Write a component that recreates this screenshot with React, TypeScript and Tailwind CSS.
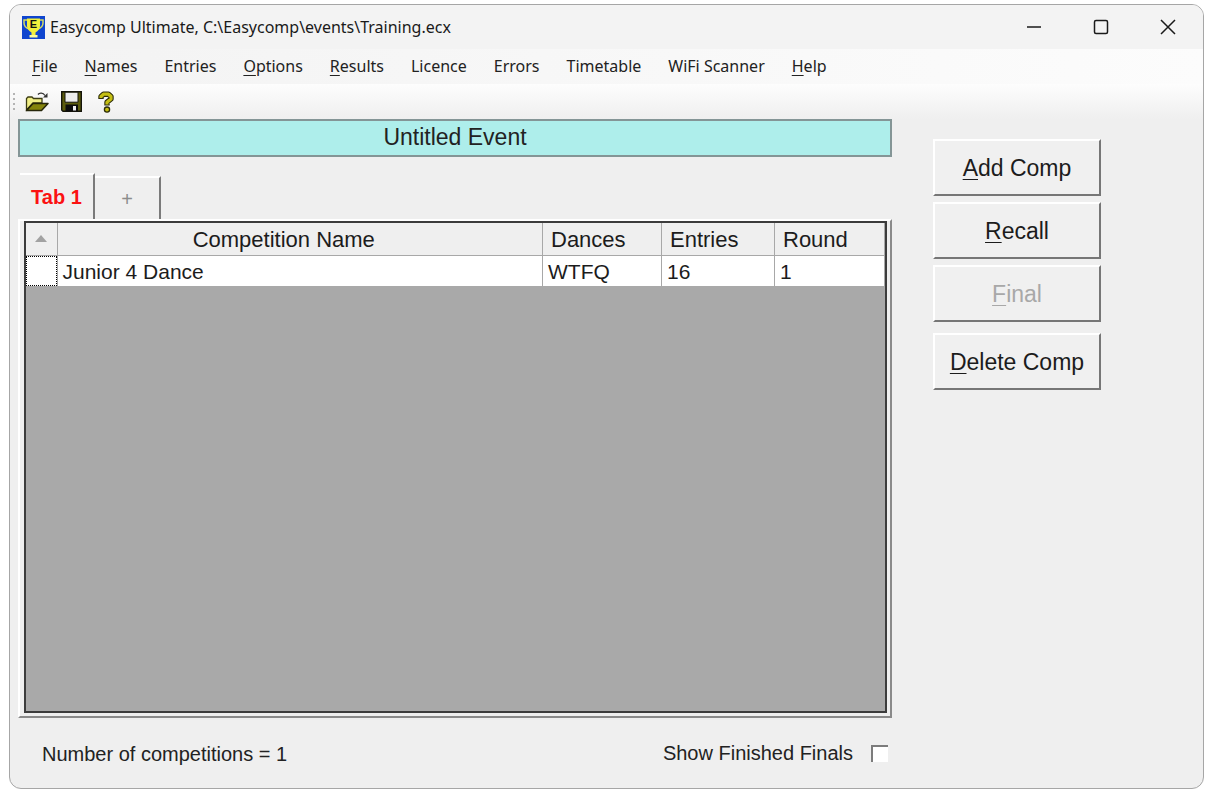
import { useState, type ReactNode } from "react"

const menuItems = [
  { label: "File", mnemonic: true },
  { label: "Names", mnemonic: true },
  { label: "Entries", mnemonic: false },
  { label: "Options", mnemonic: true },
  { label: "Results", mnemonic: true },
  { label: "Licence", mnemonic: false },
  { label: "Errors", mnemonic: false },
  { label: "Timetable", mnemonic: false },
  { label: "WiFi Scanner", mnemonic: false },
  { label: "Help", mnemonic: true },
]

const competitions = [{ name: "Junior 4 Dance", dances: "WTFQ", entries: 16, round: 1 }]

function Mnemonic({ label }: { label: string }) {
  return (
    <>
      <span className="underline decoration-1 underline-offset-3">{label[0]}</span>
      {label.slice(1)}
    </>
  )
}

function TrophyIcon() {
  return (
    <svg width="23" height="23" viewBox="0 0 23 23" aria-hidden="true">
      <rect width="23" height="23" fill="#0f45cf" />
      <path d="M6 4H2v3c0 3 2 5 5 6M17 4h4v3c0 3-2 5-5 6" fill="none" stroke="#d3dc62" strokeWidth="1.500" />
      <path d="M5 2.500h13V10c0 3-2 5-4.500 6.500V19h-4v-2.500C7 15 5 13 5 10z" fill="#f2f03c" />
      <path d="M7.500 19h8v2.500h-8z" fill="#fdfb9a" />
      <text x="11.500" y="12" textAnchor="middle" fontSize="11" fontWeight="700" fontFamily="Liberation Sans, sans-serif" fill="#111">
        E
      </text>
    </svg>
  )
}

function OpenIcon() {
  return (
    <svg width="24" height="22" viewBox="0 0 24 22" aria-hidden="true">
      <path d="M1.500 19V7.500L3 6h4l1.500 1.500h8.500V12H8z" fill="#f0ee86" stroke="#3c3c12" strokeWidth="1.300" />
      <path d="M1.500 19.500L8 12.500h15L16.500 19.500z" fill="#84840c" stroke="#26260a" strokeWidth="1.500" strokeLinejoin="round" />
      <path d="M13 3.500c1.500-2 5-2 7 1" fill="none" stroke="#333" strokeWidth="1.300" />
      <path d="M22.500 2v4.500H18z" fill="#333" />
    </svg>
  )
}

function SaveIcon() {
  return (
    <svg width="21" height="21" viewBox="0 0 21 21" aria-hidden="true">
      <path d="M.700.700h19.600v19.600H2L.700 19z" fill="#5c5c0c" stroke="#14140a" strokeWidth="1.400" />
      <path d="M4 1.200h13v10H4z" fill="#ececec" stroke="#14140a" />
      <path d="M4.500 13.500h12.500v6.800H4.500z" fill="#0c0c0c" />
      <path d="M12 15h3v4.500h-3z" fill="#f0f0f0" />
    </svg>
  )
}

function HelpIcon() {
  return (
    <svg width="16" height="22" viewBox="0 0 16 22" aria-hidden="true">
      <g fill="none" strokeLinejoin="round">
        <path d="M3 8V5.500L5.500 3.200h5L13 5.500v2.500L9 11.200V14.500" stroke="#2c2c08" strokeWidth="5.400" />
        <path d="M3 7V5.500L5.500 3.200h5L13 5.500v2.500L9 11.200V13.500" stroke="#c4be14" strokeWidth="3.200" />
      </g>
      <circle cx="9" cy="18.600" r="2.600" fill="#c4be14" stroke="#2c2c08" strokeWidth="1.300" />
    </svg>
  )
}

function CaptionButton({ label, children }: { label: string; children: ReactNode }) {
  return (
    <button type="button" aria-label={label} className="flex h-full w-[67px] items-center justify-center hover:bg-black/5">
      <svg width="16" height="16" viewBox="0 0 16 16" fill="none" stroke="#1a1a1a" strokeWidth="1.500" aria-hidden="true">
        {children}
      </svg>
    </button>
  )
}

function CommandButton({ label, disabled = false }: { label: string; disabled?: boolean }) {
  return (
    <button
      type="button"
      disabled={disabled}
      className="h-[57px] w-full border-2 border-t-white border-r-[#767676] border-b-[#767676] border-l-white bg-[#f0f0f0] text-[23px] leading-7 text-[#1c1c1c] disabled:text-[#a8a8a8]"
    >
      <Mnemonic label={label} />
    </button>
  )
}

export default function App() {
  const [showFinished, setShowFinished] = useState(false)

  return (
    <div className="flex min-h-screen flex-col bg-white pt-1 pr-[10px] pb-2 pl-[9px] font-['Liberation_Sans',Arial,sans-serif] text-[#222]">
      <div className="flex flex-1 flex-col overflow-hidden rounded-xl border border-[#a6a6a6] bg-[#efefef]">
        <header className="flex h-11 items-center bg-[#f3f3f3] pr-[2px] pl-3 font-['Noto_Sans','Open_Sans',sans-serif]">
          <TrophyIcon />
          <h1 className="ml-[5px] flex-1 text-[16px] leading-6 text-[#1a1a1a]">
            Easycomp Ultimate, C:\Easycomp\events\Training.ecx
          </h1>
          <div className="flex h-full">
            <CaptionButton label="Minimize">
              <path d="M1 8h14" />
            </CaptionButton>
            <CaptionButton label="Maximize">
              <rect x="1.500" y="1.500" width="13" height="13" rx="1.500" />
            </CaptionButton>
            <CaptionButton label="Close">
              <path d="M1 1l14 14M15 1L1 15" />
            </CaptionButton>
          </div>
        </header>

        <nav className="flex h-[35px] items-center gap-[27px] bg-linear-to-r from-[#f3f3f3] to-[#fcfcfc] pb-[2px] pl-[22px] font-['Noto_Sans','Open_Sans',sans-serif] text-[16px] leading-6">
          {menuItems.map((item) => (
            <button key={item.label} type="button" className="whitespace-nowrap">
              {item.mnemonic ? <Mnemonic label={item.label} /> : item.label}
            </button>
          ))}
        </nav>

        <div className="flex h-[35px] items-center bg-linear-to-b from-[#fdfdfd] to-[#efefef] pl-[3px]">
          <div className="flex flex-col gap-[3px]">
            <span className="size-[2px] bg-[#b4b4b4]" />
            <span className="size-[2px] bg-[#b4b4b4]" />
            <span className="size-[2px] bg-[#b4b4b4]" />
            <span className="size-[2px] bg-[#b4b4b4]" />
          </div>
          <button type="button" aria-label="Open" className="ml-[10px]">
            <OpenIcon />
          </button>
          <button type="button" aria-label="Save" className="ml-3">
            <SaveIcon />
          </button>
          <button type="button" aria-label="Help topics" className="ml-4">
            <HelpIcon />
          </button>
        </div>

        <main className="flex flex-1 pl-2">
          <section className="flex flex-1 flex-col">
            <h2 className="h-[38px] border-2 border-[#849596] bg-[#aeeeeb] text-center text-[23px] leading-8">
              Untitled Event
            </h2>

            <div role="tablist" className="mt-4 flex items-end pl-[2px]">
              <button
                type="button"
                role="tab"
                aria-selected="true"
                className="h-[46px] w-[75px] border-t-2 border-r-2 border-t-white border-r-[#7a7a7a] text-[20px] leading-6 font-bold text-[#fb1212]"
              >
                Tab 1
              </button>
              <button
                type="button"
                role="tab"
                aria-selected="false"
                aria-label="New tab"
                className="h-[43px] w-[66px] border-t-2 border-r-2 border-t-white border-r-[#7a7a7a] text-[20px] leading-6 text-[#8c8c8c]"
              >
                +
              </button>
            </div>

            <div className="flex flex-1 flex-col border-2 border-t-white border-r-[#8a8a8a] border-b-[#8a8a8a] border-l-white pr-[3px] pb-[3px] pl-1">
              <div className="flex-1 border-2 border-[#3c3c3c] bg-[#a9a9a9]">
                <table className="w-full table-fixed border-collapse text-[21px] leading-6 text-[#1c1c1c]">
                  <colgroup>
                    <col className="w-[31px]" />
                    <col />
                    <col className="w-[119px]" />
                    <col className="w-[113px]" />
                    <col className="w-[110px]" />
                  </colgroup>
                  <thead>
                    <tr className="h-8 bg-[#efefef] text-left text-[22px]">
                      <th className="border-r border-b border-[#a8a8a8]" aria-label="Sort">
                        <svg className="mx-auto" width="12" height="7" viewBox="0 0 12 7" aria-hidden="true">
                          <path d="M6 0l6 7H0z" fill="#a2a2a2" />
                        </svg>
                      </th>
                      <th className="border-r border-b border-[#a8a8a8] pt-[2px] pr-8 text-center font-normal">Competition Name</th>
                      <th className="border-r border-b border-[#a8a8a8] pt-[2px] pl-2 font-normal">Dances</th>
                      <th className="border-r border-b border-[#a8a8a8] pt-[2px] pl-2 font-normal">Entries</th>
                      <th className="border-r border-b border-[#a8a8a8] pt-[2px] pl-2 font-normal">Round</th>
                    </tr>
                  </thead>
                  <tbody>
                    {competitions.map((comp) => (
                      <tr key={comp.name} className="h-[30px] bg-white">
                        <td className="border-r border-[#a8a8a8] p-0">
                          <div className="h-[30px] border border-dotted border-black" />
                        </td>
                        <td className="border-r border-[#a8a8a8] pt-[2px] pl-[5px]">{comp.name}</td>
                        <td className="border-r border-[#a8a8a8] pt-[2px] pl-[5px]">{comp.dances}</td>
                        <td className="border-r border-[#a8a8a8] pt-[2px] pl-[5px]">{comp.entries}</td>
                        <td className="border-r border-[#a8a8a8] pt-[2px] pl-[5px]">{comp.round}</td>
                      </tr>
                    ))}
                  </tbody>
                </table>
              </div>
            </div>

            <footer className="flex h-[70px] items-center justify-between pr-1 pl-6 text-[20px] leading-6">
              <p className="pt-[2px]">Number of competitions = {competitions.length}</p>
              <label className="flex items-center gap-[18px]">
                Show Finished Finals
                <input
                  type="checkbox"
                  checked={showFinished}
                  onChange={(e) => setShowFinished(e.target.checked)}
                  className="size-[17px] appearance-none border-t-2 border-l-2 border-[#7c7c7c] bg-white checked:bg-[#555]"
                />
              </label>
            </footer>
          </section>

          <aside className="mr-[102px] ml-[41px] flex w-[168px] flex-col gap-[6px] pt-5">
            <CommandButton label="Add Comp" />
            <CommandButton label="Recall" />
            <CommandButton label="Final" disabled />
            <div className="pt-[5px]">
              <CommandButton label="Delete Comp" />
            </div>
          </aside>
        </main>
      </div>
    </div>
  )
}
